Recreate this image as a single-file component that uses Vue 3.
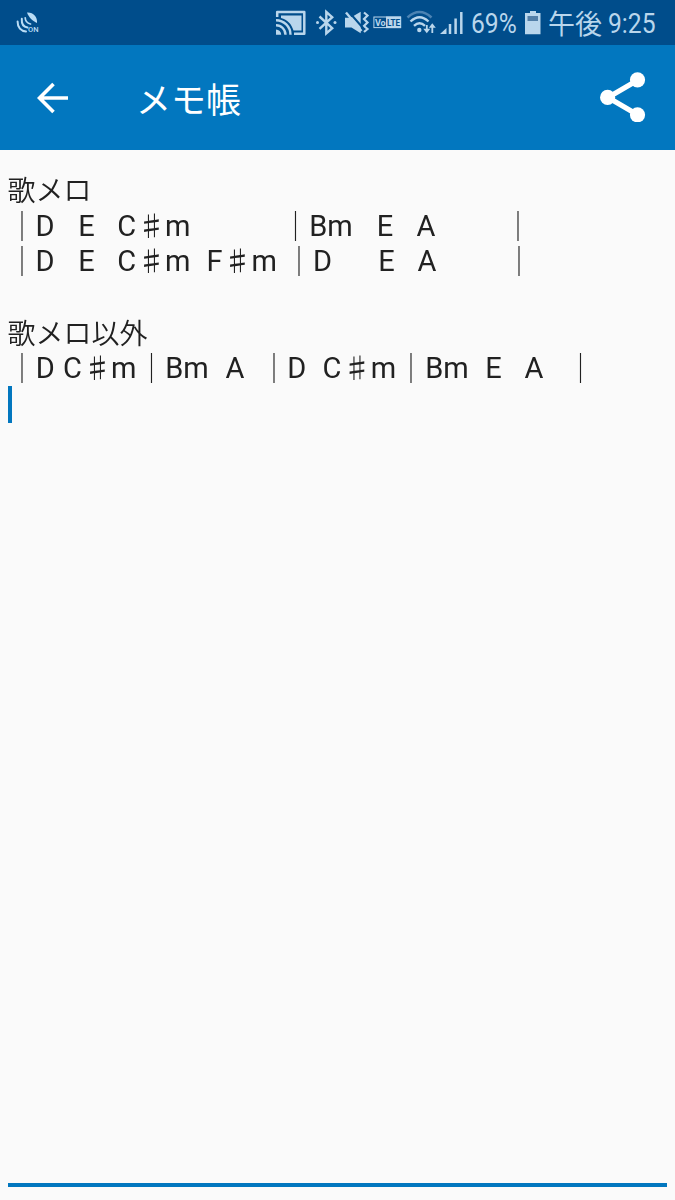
<script setup>
import { ref } from "vue";

// each token is [text, x]; x is the left edge inside the note, in px
const lines = [
  [["歌メロ", 7.5]],
  [
    ["｜", 8], ["D", 35.5], ["E", 78.3], ["C", 117.3], ["♯", 137.5], ["m", 165],
    ["｜", 281.5], ["Bm", 309.3], ["E", 376.8], ["A", 416.5], ["｜", 504],
  ],
  [
    ["｜", 8], ["D", 35.5], ["E", 78.3], ["C", 117.3], ["♯", 137.5], ["m", 165],
    ["F", 206.5], ["♯", 223.5], ["m", 251.5],
    ["｜", 285], ["D", 313], ["E", 378.2], ["A", 417.5], ["｜", 505],
  ],
  [],
  [["歌メロ以外", 7.5]],
  [
    ["｜", 8], ["D", 35.8], ["C", 63], ["♯", 83.5], ["m", 111],
    ["｜", 137.5], ["Bm", 165.3], ["A", 225.5], ["｜", 260], ["D", 287.3],
    ["C", 322.5], ["♯", 343], ["m", 370.7], ["｜", 397], ["Bm", 425.2],
    ["E", 485.2], ["A", 524.5], ["｜", 566.5],
  ],
];

const rows = ref(
  lines.map((line) =>
    line.map(([text, x], i) => ({
      text,
      kana: text.length > 2,
      sharp: text === "♯",
      bar: text === "｜",
      gap: i === 0 ? x : 0,
      width: line[i + 1] ? line[i + 1][1] - x : 160,
    }))
  )
);
</script>

<template>
  <div class="screen">
    <header class="status-bar">
      <svg class="status-left" viewBox="0 0 60 45">
        <g fill="none" stroke="#b9dcf5" stroke-linecap="round">
          <path d="M17.6 21.5C17.5 27.5 21 31.3 26 31.5" stroke-width="2" />
          <path d="M21.8 18.8C21.5 23.5 23.5 27 27.5 27.6" stroke-width="2" />
          <path d="M25.2 17.8C25.3 21 27 23.2 30.5 24" stroke-width="1.7" />
        </g>
        <path d="M27 12.5C33 12 37.5 16.5 37 23C33 21.5 28.5 17 27 12.5Z" fill="#b9dcf5" />
        <text x="28" y="32.2" class="on-label">ON</text>
      </svg>

      <svg class="status-icons" viewBox="270 0 195 45">
        <g fill="none" stroke="#b9d6ec">
          <!-- cast -->
          <path d="M277.2 17V12H304.3V33.7H294" stroke-width="2.5" stroke-linejoin="round" />
          <path d="M276 20.2A14.5 14.5 0 0 1 290.5 34.7M276 25.2A9.5 9.5 0 0 1 285.5 34.7" stroke-width="2.4" />
          <!-- bluetooth -->
          <path d="M319.5 16.5L332.2 28.2L326.3 33.3V12L332.2 17.2L319.5 28.8" stroke-width="2.4" />
          <!-- vibrate -->
          <path d="M364 12.5L367.5 15.5L364 19L367.5 22.5L364 26L367.5 29L364 32" stroke-width="2.2" />
        </g>
        <g fill="#b9d6ec">
          <path d="M281 15.5H301.5V30.5H293.5C291.5 24 287.5 19.5 281 18Z" />
          <path d="M276 29.5A5.2 5.2 0 0 1 281.2 34.7H276Z" />
          <circle cx="317.5" cy="22.6" r="1.5" />
          <circle cx="335" cy="22.6" r="1.5" />
          <path d="M345 17.8H350.5L360.7 11.8V33.3L351.5 27.5H345Z" />
        </g>
        <path d="M348.5 11.5L363 28" stroke="#004d8b" stroke-width="2" />
        <path d="M346 12.5L361.5 31" stroke="#b9d6ec" stroke-width="2.4" />

        <!-- volte -->
        <rect x="373.9" y="17" width="26.8" height="10.6" fill="none" stroke="#b9d6ec" />
        <rect x="386" y="16.5" width="15" height="11.6" fill="#b9d6ec" />
        <text x="375" y="26" class="volte" textLength="10.5">Vo</text>
        <text x="387" y="26.2" class="volte volte-dark" textLength="13" lengthAdjust="spacingAndGlyphs">LTE</text>

        <!-- wifi -->
        <path d="M407.5 17.5Q419.5 6.5 431.5 17.5" fill="none" stroke="#4b83b3" stroke-width="2.6" />
        <path d="M410.5 21.5Q419.5 13 428.5 21.5M414 25.8Q419.5 20.5 425 25.8" fill="none" stroke="#b9d6ec" stroke-width="2.4" />
        <circle cx="419.3" cy="30" r="2.2" fill="#b9d6ec" />
        <path d="M426.8 25V31M432.3 33V26" stroke="#b9d6ec" stroke-width="1.8" />
        <path d="M423.3 28.8H430.3L426.8 33.2ZM428.8 27.8H435.8L432.3 23.3Z" fill="#b9d6ec" />

        <!-- signal -->
        <path d="M440 34L446.5 28V34Z" fill="#b9d6ec" />
        <path d="M450 24V34M455.6 18.5V34M461.3 12V34" stroke="#b9d6ec" stroke-width="2.5" />
      </svg>

      <span class="percent"><span class="narrow">69%</span></span>
      <svg class="battery" viewBox="0 0 16 24">
        <path d="M5 0H11V2H15.5V23.2H0V2H5Z" fill="#b9d6ec" />
        <path d="M2.5 5H13V10H2.5Z" fill="#527fa8" />
      </svg>
      <span class="ampm">午後</span>
      <span class="clock"><span class="narrow">9:25</span></span>
    </header>

    <nav class="app-bar">
      <svg class="back" viewBox="0 0 32 32">
        <path d="M31 16H3M16.5 2L2.5 16L16.5 30" />
      </svg>
      <h1 class="title">メモ帳</h1>
      <svg class="share" viewBox="0 0 46 50">
        <path d="M38 8L8 25.5L38 43" fill="none" stroke="#fff" stroke-width="5.2" />
        <circle cx="37.5" cy="7.8" r="7.6" />
        <circle cx="7.6" cy="25.4" r="7.6" />
        <circle cx="37.5" cy="42.8" r="7.6" />
      </svg>
    </nav>

    <main class="note">
      <div v-for="(row, i) in rows" :key="i" class="line">
        <span
          v-for="(token, j) in row"
          :key="j"
          class="token"
          :class="{ kana: token.kana, sharp: token.sharp, bar: token.bar }"
          :style="{ width: token.width + 'px', marginLeft: token.gap + 'px' }"
          >{{ token.text }}</span
        >
      </div>
      <div class="line">
        <span class="caret"></span>
      </div>
    </main>
    <div class="underline"></div>
  </div>
</template>

<style>
body {
  margin: 0;
  background: #fafafa;
}
</style>

<style scoped>
.screen {
  display: flex;
  flex-direction: column;
  width: 675px;
  height: 1200px;
  overflow: hidden;
  background: #fafafa;
  font-family: Roboto, "Noto Sans CJK JP", sans-serif;
}

.status-bar {
  display: flex;
  align-items: flex-start;
  flex: none;
  height: 45px;
  background: #004d8b;
  color: #b9d6ec;
  font-size: 28px;
  line-height: 47px;
  white-space: nowrap;
}

.status-left {
  width: 60px;
  height: 45px;
  margin-right: 210px;
}

.on-label {
  font-size: 7.5px;
  font-weight: 500;
  fill: #b9dcf5;
}

.status-icons {
  width: 195px;
  height: 45px;
}

.volte {
  font-size: 9px;
  font-weight: 700;
  fill: #b9d6ec;
}

.volte-dark {
  fill: #004d8b;
}

.percent {
  width: 53px;
  margin-left: 6px;
}

.narrow {
  display: inline-block;
  transform: scaleX(0.88);
  transform-origin: left;
}

.battery {
  width: 16px;
  height: 24px;
  margin: 11px 7px 0 1px;
}

.ampm {
  width: 60px;
  font-family: "Noto Sans CJK JP", sans-serif;
  font-size: 27px;
  line-height: 45px;
}

.app-bar {
  display: flex;
  align-items: center;
  flex: none;
  height: 105px;
  background: #0277bf;
}

.back {
  width: 32px;
  height: 32px;
  margin-left: 37px;
}

.back path {
  fill: none;
  stroke: #fff;
  stroke-width: 3.6;
}

.title {
  flex: 1;
  margin: 0 0 0 67px;
  color: #fff;
  font-family: "Noto Sans CJK JP", sans-serif;
  font-size: 35px;
  font-weight: 400;
  line-height: 50px;
}

.share {
  width: 46px;
  height: 50px;
  margin: 0 29px 2px 0;
  fill: #fff;
}

.note {
  flex: 1;
  padding-top: 22px;
  color: #212121;
  will-change: transform;
}

.line {
  display: flex;
  height: 35.7px;
  font-size: 29px;
  line-height: 36px;
  white-space: nowrap;
}

.token {
  flex: none;
}

.kana,
.sharp,
.bar {
  font-family: "Noto Sans CJK JP", sans-serif;
  font-size: 28px;
  line-height: 34px;
}

.kana {
  font-weight: 350;
}

.sharp {
  letter-spacing: -2px;
}

.bar {
  font-size: 30px;
  font-weight: 300;
  line-height: 33px;
  letter-spacing: -4px;
  text-indent: -1px;
}

.caret {
  width: 4px;
  height: 37px;
  margin-left: 7.5px;
  background: #0277bf;
}

.underline {
  flex: none;
  height: 4px;
  margin: 0 8px 13px;
  background: #0277bf;
}
</style>
